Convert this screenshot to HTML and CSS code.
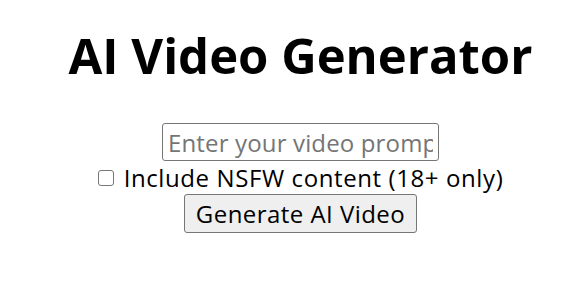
FILE: index.html
```html
<!DOCTYPE html>
<html lang="en">
<head>
<meta charset="utf-8">
<title>AI Video Generator</title>
<link rel="stylesheet" href="styles.css">
</head>
<body>
<main class="app">
  <h1 class="title">AI Video Generator</h1>
  <input class="prompt" type="text" placeholder="Enter your video prompt">
  <label class="nsfw"><input class="nsfw-box" type="checkbox"><span class="nsfw-text">Include NSFW content (18+ only)</span></label>
  <button class="generate" type="button">Generate AI Video</button>
</main>
</body>
</html>
```

FILE: styles.css
```css
html, body {
  margin: 0;
  padding: 0;
  background: #ffffff;
}

body {
  font-family: "Open Sans", "Noto Sans", "DejaVu Sans", sans-serif;
  color: #000000;
}

.app {
  display: flex;
  flex-direction: column;
  align-items: center;
  padding-left: 14px;
}

.title {
  margin: 24px 0 0 0;
  font-size: 49px;
  line-height: 62px;
  font-weight: 700;
  white-space: nowrap;
}

.prompt {
  box-sizing: border-box;
  margin-top: 37px;
  width: 277px;
  height: 38px;
  padding: 0 5px;
  border: 1px solid #767676;
  border-radius: 3px;
  font-family: inherit;
  font-size: 24px;
  letter-spacing: 0.15px;
  color: #000000;
  background: #ffffff;
}

.prompt::placeholder {
  color: #757575;
}

.nsfw {
  display: flex;
  align-items: center;
  height: 33px;
  font-size: 24px;
  letter-spacing: 0.6px;
}

.nsfw-box {
  appearance: none;
  -webkit-appearance: none;
  box-sizing: border-box;
  width: 16px;
  height: 16px;
  margin: 0 10px 0 0;
  border: 1px solid #767676;
  border-radius: 3px;
  background: #ffffff;
}

.generate {
  box-sizing: border-box;
  width: 233px;
  height: 39px;
  padding: 0;
  border: 1px solid #767676;
  border-radius: 3px;
  background: #efefef;
  font-family: inherit;
  font-size: 24px;
  letter-spacing: 0.45px;
  color: #000000;
}
```
